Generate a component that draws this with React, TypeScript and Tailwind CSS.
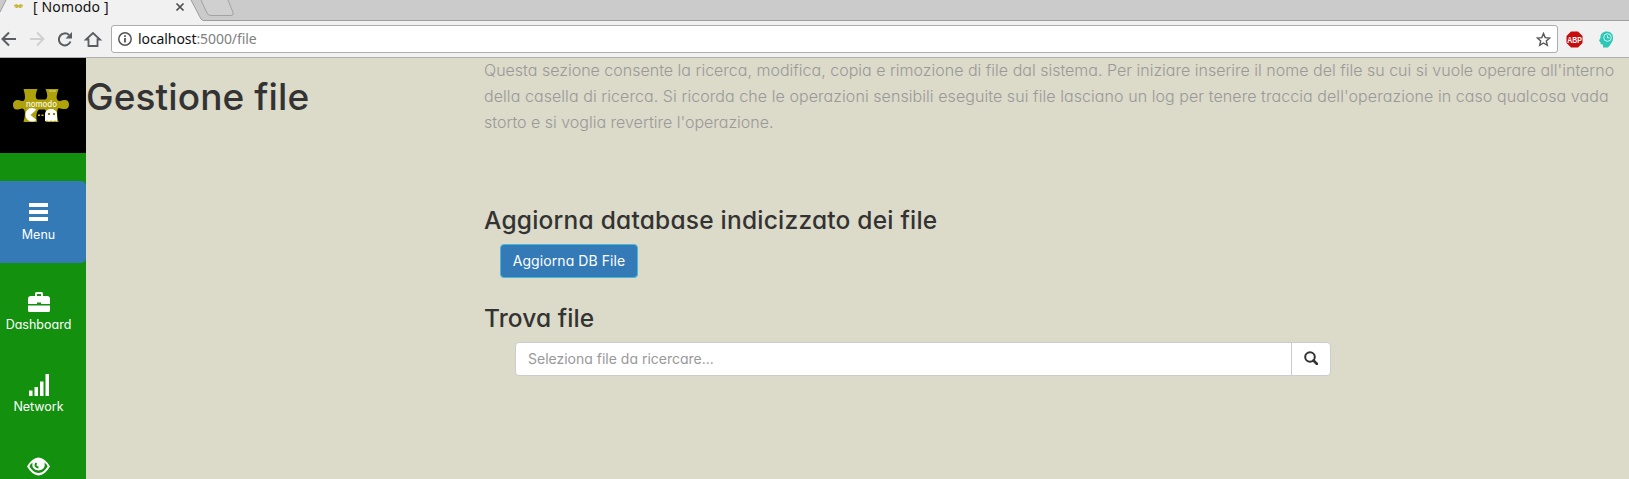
import React from "react";

function PuzzleLogo() {
  return (
    <svg className="block" width="58" height="36" viewBox="0 0 58 36">
      <path
        d="M11.500 1h14c-1.500 4-3 8.500 0 10.500h8c3-2 1.500-6.500 0-10.500h13c-1 4-3 8-1 11 2 2.500 4 0 6.500 0 3-.5 5 1 5 4.500s-2 5-5 4.500c-2.500 0-4-1.500-6-.5-1.500 3-1 8 .5 13.500h-12.500c1-5 1-10-1-12.500h-6c-3 2.500-3 7.500-2 12.500h-13.500c1.500-5 2-10.500.5-12.500-2-2-4 0-6 0C3 22 1 20.500 1 17s2-5 5-5c2.500 0 4 2 6 .5C14 10 12.500 5 11.500 1z"
        fill="#aea10c"
      />
      <path d="M18.500 27l6-5.500a6.800 6.800 0 1 0 0 10.500z" fill="#fff" />
      <path d="M33 33.500V26a6 5 0 0 1 12 0v7.500l-2-1-2 1-2-1-2 1-2-1z" fill="#fff" />
      <path d="M26 26.500h2V28h-2zM29.500 26.500h2V28h-2z" fill="#c9bc25" />
      <path d="M36 25h2v2h-2zM41 25h2v2h-2z" fill="#8c810c" />
      <text x="14" y="18.500" textLength="31" lengthAdjust="spacingAndGlyphs" fontSize="9" fontWeight="500" fill="#faf8e0" fontFamily="Inter, sans-serif">nomodo</text>
      <path d="M37 3h7" stroke="#ddd68a" strokeWidth="1" />
    </svg>
  );
}

function NavItem({ icon, label, className }: { icon: React.ReactNode; label?: string; className: string }) {
  return (
    <a className={`flex w-[86px] flex-col items-center rounded-r-[5px] pr-[9px] text-white ${className}`}>
      <span className="flex h-[24px] items-center">{icon}</span>
      {label && <span className="mt-[2px] text-[12.5px] leading-[18px]">{label}</span>}
    </a>
  );
}

const MenuIcon = () => (
  <svg className="-ml-[1px]" width="19" height="18" viewBox="0 0 19 18" fill="#fff"><path d="M0 0h19v4H0zM0 7h19v4H0zM0 14h19v4H0z" /></svg>
);
const BriefcaseIcon = () => (
  <svg className="-mt-[2px]" width="22" height="21" viewBox="0 0 22 21" fill="#fff">
    <path d="M7 5V2.500Q7 1 8.500 1h5Q15 1 15 2.500V5h4q3 0 3 3v5h-9v-1.500H9V13H0V8q0-3 3-3zm2 0h4V3H9zM0 14.500h22v5q0 1.500-1.500 1.500h-19Q0 21 0 19.500z" />
  </svg>
);
const SignalIcon = () => (
  <svg className="mt-[2px]" width="20" height="22" viewBox="0 0 20 22" fill="#fff"><path d="M0 16.500h3.500V22H0zM5.500 13H9v9H5.500zM11 7.500h3.500V22H11zM16.500 0H20v22h-3.500z" /></svg>
);
const EyeIcon = () => (
  <svg width="23" height="19" viewBox="0 0 23 19">
    <path d="M0 9.500Q5 1 11.500.5 18 1 23 9.500 18 18 11.500 18.500 5 18 0 9.500z" fill="#fff" />
    <path d="M5.500 5.500Q3 7.500 2.500 9.500 6 15.500 11.500 16 17 15.500 20.500 9.500 20 7.500 17.500 5.500 19 13 11.500 13.500 4 13 5.500 5.500z" fill="#12900e" />
    <path d="M9.200 6q-2 4 2.300 4.500" stroke="#12900e" strokeWidth="2" fill="none" />
  </svg>
);

function Browser() {
  return (
    <header className="h-[58px] shrink-0 overflow-hidden font-['Noto_Sans','Open_Sans',sans-serif]">
      <div className="relative flex h-[21px] items-start border-b border-[#a0a0a0] bg-[#cbcbcb]">
        <svg className="absolute left-0 top-0" width="240" height="21" viewBox="0 0 240 21">
          <path d="M0 21V12L6 0H191l10 19q1 1.500 3 1.500V21z" fill="#f1f1f1" />
          <path d="M0 12L6 0M191 0l10 19q1 1.500 3 1.500h36" fill="none" stroke="#9c9c9c" />
          <path d="M201 0l6 13q1 2.500 4 2.500h20q3 0 2-3L228 0" fill="#d0d0d0" stroke="#a2a2a2" />
          <path d="M14 5l3-1 1.500 1.500L20 4l3 1v1.500h-2l1 1.500h-2.500l-1-1-1 1H15l1-1.500h-2z" fill="#c5b83b" />
          <path d="M176.500 3.500l7 7m0-7l-7 7" stroke="#4d4d4d" strokeWidth="1.700" />
        </svg>
        <span className="relative ml-[33px] whitespace-nowrap text-[14px] leading-[14px] tracking-[0.15px] text-[#111]">[ Nomodo ]</span>
      </div>
      <div className="flex h-[37px] items-center border-b border-[#b0b0b0] bg-[#f1f1f1]">
        <svg width="111" height="36" viewBox="0 0 111 36" fill="none" stroke="#5a5d61" strokeWidth="2">
          <path d="M16 18H3M9 11.500L2.500 18 9 24.500" />
          <path d="M30 18h13M37 11.500l6.500 6.500-6.500 6.500" stroke="#d0d0d0" />
          <path d="M70.500 20.500a6 6 0 1 1-1.500-6.500" />
          <path d="M72 11v6.500h-6.500z" fill="#5a5d61" stroke="none" />
          <path d="M86 18.500L93 12l7 6.500h-2.500V25h-9v-6.500z" strokeWidth="1.800" />
        </svg>
        <div className="flex h-[28px] w-[1447px] items-center rounded-[3px] border border-[#adadad] bg-white pl-[6px] pr-[6px]">
          <svg width="14" height="14" viewBox="0 0 14 14" fill="none" stroke="#555"><circle cx="7" cy="7" r="6.200" strokeWidth="1.500" /><path d="M7 6v4.500M7 3.300v1.700" strokeWidth="1.800" /></svg>
          <span className="ml-[6px] flex-1 text-[14px] leading-5 tracking-[-0.08px] text-[#111]">localhost<span className="text-[#808080]">:5000/file</span></span>
          <svg width="15" height="15" viewBox="0 0 15 15"><path d="M7.500 1.500l1.700 4.100 4.500.4-3.400 2.900 1 4.400-3.800-2.300-3.800 2.300 1-4.400L1.300 6l4.500-.4z" fill="none" stroke="#555" strokeWidth="1.400" /></svg>
        </div>
        <svg className="ml-[8px]" width="17" height="17" viewBox="0 0 17 17">
          <path d="M5 .5h7L16.500 5v7L12 16.500H5L.5 12V5z" fill="#c80c0c" />
          <text x="1.200" y="11.700" textLength="14.600" lengthAdjust="spacingAndGlyphs" fontSize="9" fontWeight="bold" fill="#fff" fontFamily="Liberation Sans, sans-serif">ABP</text>
        </svg>
        <svg className="ml-[16px]" width="16" height="17" viewBox="0 0 16 17">
          <path d="M4 16.500v-3q-3 .5-2.500-2L0 9.500 1.500 7C1 3 4 .5 8 .5s6.500 3 6 7c0 3-2 4-2.500 6l-2.500 3z" fill="#2bc8b7" />
          <circle cx="8.500" cy="6.500" r="3.800" fill="none" stroke="#d6f7f2" />
          <path d="M8.500 4.500v2.300h2" fill="none" stroke="#d6f7f2" />
        </svg>
      </div>
    </header>
  );
}

export default function App() {
  return (
    <div className="flex h-[479px] w-[1629px] flex-col overflow-hidden bg-[#dcdac9] font-['Inter',sans-serif] [font-feature-settings:'cv11']">
      <Browser />
      <div className="flex min-h-0 flex-1">
        <aside className="h-[421px] w-[86px] shrink-0 overflow-hidden bg-[#12900e]">
          <div className="flex h-[95px] items-start bg-black pl-[12px] pt-[30px]"><PuzzleLogo /></div>
          <nav className="flex flex-col pt-[28px]">
            <NavItem className="h-[82px] bg-[#337ab7] pt-[19px]" icon={<MenuIcon />} label="Menu" />
            <NavItem className="h-[82px] pt-[27px]" icon={<BriefcaseIcon />} label="Dashboard" />
            <NavItem className="h-[82px] pt-[27px]" icon={<SignalIcon />} label="Network" />
            <NavItem className="h-[82px] pt-[27px]" icon={<EyeIcon />} />
          </nav>
        </aside>
        <h1 className="w-[398px] shrink-0 whitespace-nowrap pt-[19px] text-[37px] font-medium leading-[40px] tracking-[0.1px] text-[#333]">Gestione file</h1>
        <main className="flex min-w-0 flex-1 flex-col whitespace-nowrap">
          <div className="-mt-[1px] h-[140px] text-[16px] font-light leading-[26px] text-[#999]">
            <p className="tracking-[0.006px]">Questa sezione consente la ricerca, modifica, copia e rimozione di file dal sistema. Per iniziare inserire il nome del file su cui si vuole operare all'interno</p>
            <p className="tracking-[0.07px]">della casella di ricerca. Si ricorda che le operazioni sensibili eseguite sui file lasciano un log per tenere traccia dell'operazione in caso qualcosa vada</p>
            <p>storto e si voglia revertire l'operazione.</p>
          </div>
          <h3 className="mt-[10px] h-[37px] text-[24.5px] font-medium leading-[27px] tracking-[0.22px] text-[#333]">Aggiorna database indicizzato dei file</h3>
          <button className="ml-[16px] flex h-[34px] w-[138px] items-center justify-center rounded-[4px] border border-[#46b8da] bg-[#337ab7] pb-[2px] text-[14px] tracking-[0.08px] text-white">Aggiorna DB File</button>
          <h3 className="mt-[27px] h-[37px] text-[24.5px] font-medium leading-[27px] tracking-[0.1px] text-[#333]">Trova file</h3>
          <div className="ml-[31px] flex h-[34px] w-[816px] rounded-[4px] border border-[#ccc] bg-white">
            <span className="flex flex-1 items-center pb-[2px] pl-[12px] text-[14px] text-[#999]">Seleziona file da ricercare...</span>
            <button className="flex w-[39px] items-center justify-center border-l border-[#ccc] pb-[2px] pr-[1px]">
              <svg width="14" height="14" viewBox="0 0 14 14" fill="none" stroke="#333"><circle cx="6" cy="6" r="4.800" strokeWidth="2" /><path d="M9.500 9.500l3.500 3.500" strokeWidth="2.500" strokeLinecap="round" /></svg>
            </button>
          </div>
        </main>
      </div>
    </div>
  );
}
